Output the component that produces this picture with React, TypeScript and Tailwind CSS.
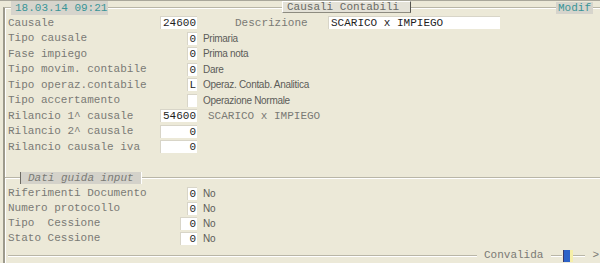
import React from "react";

type Row = {
  label: string;
  value?: string;
  boxW: number;
  note?: string;
  mono?: boolean;
};

const upper: Row[] = [
  { label: "Tipo causale", value: "0", boxW: 10, note: "Primaria" },
  { label: "Fase impiego", value: "0", boxW: 10, note: "Prima nota" },
  { label: "Tipo movim. contabile", value: "0", boxW: 10, note: "Dare" },
  { label: "Tipo operaz.contabile", value: "L", boxW: 10, note: "Operaz. Contab. Analitica" },
  { label: "Tipo accertamento", value: "", boxW: 10, note: "Operazione Normale" },
  { label: "Rilancio 1^ causale", value: "54600", boxW: 37, note: "SCARICO x IMPIEGO", mono: true },
  { label: "Rilancio 2^ causale", value: "0", boxW: 37 },
  { label: "Rilancio causale iva", value: "0", boxW: 37 },
];

const lower: Row[] = [
  { label: "Riferimenti Documento", value: "0", boxW: 10, note: "No" },
  { label: "Numero protocollo", value: "0", boxW: 10, note: "No" },
  { label: "Tipo  Cessione", value: "0", boxW: 17, note: "No" },
  { label: "Stato Cessione", value: "0", boxW: 17, note: "No" },
];

const mono = { fontFamily: '"Liberation Mono", "DejaVu Sans Mono", monospace' };
const sans = { fontFamily: '"Liberation Sans", Arial, sans-serif' };

function Field({ value, w, align = "right" }: { value: string; w: number; align?: "left" | "right" }) {
  return (
    <div
      className={`h-[13px] bg-white border-t border-l border-[#d8d5c8] text-[#1e1e1e] leading-[12px] whitespace-pre ${
        align === "right" ? "text-right pr-[1px]" : "text-left pl-[2px]"
      }`}
      style={{ width: w }}
    >
      {value}
    </div>
  );
}

function FormRow({ row, h }: { row: Row; h: string }) {
  return (
    <div className={`flex items-center ${h}`}>
      <span className="w-[152px] whitespace-pre text-[#7a7a75]">{row.label}</span>
      <div className="w-[37px] flex justify-end">
        <Field value={row.value ?? ""} w={row.boxW} />
      </div>
      {row.note &&
        (row.mono ? (
          <span className="ml-[11px] whitespace-pre text-[#7a7a75]">{row.note}</span>
        ) : (
          <span className="ml-[6px] text-[10px] tracking-[-0.3px] text-[#5c5c59]" style={sans}>
            {row.note}
          </span>
        ))}
    </div>
  );
}

function Rule({ className = "" }: { className?: string }) {
  return <div className={`h-0 border-t border-b border-t-[#b9b6a7] border-b-white ${className}`} />;
}

export default function App() {
  return (
    <div
      className="w-[600px] h-[263px] bg-[#ece9d8] border-t border-[#a9a79b] overflow-hidden pt-[6px] pl-[3px] text-[11px]"
      style={mono}
    >
      <div className="relative h-[256px] border-l-2 border-t border-l-[#9d9a8c] border-t-[#b9b6a7] shadow-[inset_1px_1px_0_#fff] flex flex-col">
        {/* header labels sit on the frame line */}
        <div className="absolute left-[6px] -top-[7px] h-[14px] w-[97px] bg-[#d6d4cc] text-[#3a9597] pl-[4px] leading-[14px]">
          18.03.14 09:21
        </div>
        <div className="absolute left-[277px] -top-[7px] h-[12px] w-[129px] bg-[#e4e2d8] border-t border-l border-white border-r border-b border-r-[#55554f] border-b-[#8d8b80] text-[#6a6a66] pl-[4px] leading-[10px]">
          Causali Contabili
        </div>
        <div className="absolute left-[551px] -top-[6px] h-[12px] w-[37px] bg-[#d6d4cc] text-[#3a9597] pl-[2px] leading-[12px]">
          Modif
        </div>

        <div className="pt-[7px] pl-[3px]">
          <div className="flex items-center h-[15.5px]">
            <span className="w-[152px] text-[#7a7a75]">Causale</span>
            <Field value="24600" w={37} />
            <span className="ml-[38px] w-[93px] text-[#7a7a75]">Descrizione</span>
            <Field value="SCARICO x IMPIEGO" w={172} align="left" />
          </div>
          {upper.map((r) => (
            <FormRow key={r.label} row={r} h="h-[15.5px]" />
          ))}
        </div>

        <div className="mt-[17px] flex items-center h-[12px]">
          <Rule className="w-[15px]" />
          <div className="h-[12px] w-[122px] bg-[#d4d2ca] border-l border-l-[#6d6b63] border-r border-r-white text-[#7a7a75] italic pl-[7px] leading-[12px]">
            Dati guida input
          </div>
          <Rule className="flex-1" />
        </div>

        <div className="mt-[2px] pl-[3px]">
          {lower.map((r) => (
            <FormRow key={r.label} row={r} h="h-[15.2px]" />
          ))}
        </div>

        <div className="mt-auto mb-[1px] flex items-center h-[13px]">
          <Rule className="ml-[3px] w-[469px]" />
          <span className="ml-[7px] text-[#7a7a75]">Convalida</span>
          <Rule className="ml-[8px] w-[11px]" />
          <div className="ml-[1px] flex h-[12px] border-l border-[#3a3a6a]">
            <div className="w-[6px] bg-[#2d62c8]" />
            <div className="w-[3px] bg-[#f6efa8]" />
          </div>
          <Rule className="w-[12px]" />
          <span className="ml-[7px] text-[#7a7a75]">&gt;</span>
        </div>
      </div>
    </div>
  );
}
